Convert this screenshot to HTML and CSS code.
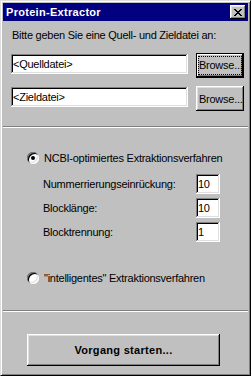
FILE: index.html
```html
<!DOCTYPE html>
<html lang="de">
<head>
    <meta charset="UTF-8">
    <meta name="viewport" content="width=device-width, initial-scale=1.0">
    <title>Protein-Extractor</title>
    <link rel="stylesheet" href="styles.css">
</head>
<body>
<div class="window">
    <div class="titlebar">
        <span class="title">Protein-Extractor</span>
        <button class="close" type="button">
            <svg width="8" height="7" viewBox="0 0 8 7" shape-rendering="crispEdges"><path fill="#000" d="M0 0h2v1H0zM6 0h2v1H6zM1 1h2v1H1zM5 1h2v1H5zM2 2h4v1H2zM3 3h2v1H3zM2 4h4v1H2zM1 5h2v1H1zM5 5h2v1H5zM0 6h2v1H0zM6 6h2v1H6z"/></svg>
        </button>
    </div>
    <div class="content">
        <p class="prompt">Bitte geben Sie eine Quell- und Zieldatei an:</p>
        <div class="file-row first">
            <input class="field file" type="text" value="&lt;Quelldatei&gt;">
            <button class="btn browse default" type="button"><span class="focus">Browse...</span></button>
        </div>
        <div class="file-row">
            <input class="field file" type="text" value="&lt;Zieldatei&gt;">
            <button class="btn browse" type="button">Browse...</button>
        </div>
        <hr class="sep first">
        <div class="radio-row first">
            <span class="radio checked"></span>
            <span class="label">NCBI-optimiertes Extraktionsverfahren</span>
        </div>
        <div class="params">
            <div class="param"><span>Nummerrierungseinrückung:</span><input class="field num" type="text" value="10"></div>
            <div class="param"><span>Blocklänge:</span><input class="field num" type="text" value="10"></div>
            <div class="param"><span>Blocktrennung:</span><input class="field num" type="text" value="1"></div>
        </div>
        <div class="radio-row second">
            <span class="radio"></span>
            <span class="label">"intelligentes" Extraktionsverfahren</span>
        </div>
        <hr class="sep second">
        <button class="btn start" type="button">Vorgang starten...</button>
    </div>
</div>
</body>
</html>
```

FILE: styles.css
```css
html, body {
    margin: 0;
    padding: 0;
    background: #c0c0c0;
}
body {
    font-family: "Liberation Sans", Arial, sans-serif;
    font-size: 11px;
    letter-spacing: -0.25px;
    color: #000;
}

.window {
    width: 251px;
    height: 376px;
    box-sizing: border-box;
    padding: 2px;
    border: 1px solid;
    border-color: #dfdfdf #000 #000 #dfdfdf;
    box-shadow: inset 1px 1px #fff, inset -1px -1px #808080;
    background: #c0c0c0;
}

/* caption */
.titlebar {
    height: 18px;
    background: #000080;
    display: flex;
    align-items: center;
    justify-content: space-between;
}
.titlebar .title {
    color: #fff;
    font-weight: bold;
    letter-spacing: 0.3px;
    line-height: 18px;
    padding-left: 3px;
}
.close {
    width: 16px;
    height: 14px;
    margin-right: 2px;
    padding: 0 0 0 4px;
    border: 0;
    background: #c0c0c0;
    box-shadow: inset -1px -1px #000, inset 1px 1px #fff, inset -2px -2px #808080, inset 2px 2px #dfdfdf;
    display: flex;
    align-items: center;
}
.close svg {
    display: block;
}

.content {
    padding: 0 4px 0 8px;
}
.prompt {
    margin: 8px 0 0 1px;
    line-height: 13px;
}

/* controls */
.field {
    box-sizing: border-box;
    height: 20px;
    margin: 0;
    border: 0;
    padding: 0 2px;
    background: #fff;
    font: inherit;
    letter-spacing: inherit;
    color: #000;
    outline: none;
    box-shadow: inset -1px -1px #fff, inset 1px 1px #808080, inset -2px -2px #dfdfdf, inset 2px 2px #000;
}
.btn {
    box-sizing: border-box;
    margin: 0;
    border: 0;
    background: #c0c0c0;
    font: inherit;
    letter-spacing: inherit;
    color: #000;
    box-shadow: inset -1px -1px #000, inset 1px 1px #fff, inset -2px -2px #808080, inset 2px 2px #dfdfdf;
}

.file-row {
    display: flex;
    align-items: flex-start;
    gap: 8px;
    margin-top: 8px;
}
.file-row.first {
    margin-top: 11px;
}
.field.file {
    flex: 1;
    min-width: 0;
    margin-top: 1px;
}
.browse {
    width: 48px;
    height: 25px;
    padding: 0 0 0 3px;
    text-align: left;
    white-space: nowrap;
    overflow: hidden;
}
.browse.default {
    display: flex;
    padding: 3px 2px;
    box-shadow: inset 1px 1px #000, inset -2px -2px #000, inset 2px 2px #fff, inset -3px -3px #808080;
}
.browse .focus {
    flex: 1;
    overflow: hidden;
    border: 1px dotted #000;
    line-height: 17px;
}

.sep {
    height: 0;
    border: 0;
    border-top: 1px solid #808080;
    border-bottom: 1px solid #fff;
    margin: 15px -4px 0 -8px;
}
.sep.second {
    margin-top: 25px;
}

.radio-row {
    display: flex;
    align-items: center;
    height: 14px;
    margin: 23px 0 0 16px;
}
.radio-row.second {
    margin-top: 29px;
}
.radio {
    position: relative;
    width: 12px;
    height: 12px;
    border-radius: 50%;
    background: #fff;
    box-shadow: inset 1px 1px #808080, inset -1px -1px #fff, inset 2px 2px #000, inset -2px -2px #dfdfdf;
}
.radio.checked::after {
    content: "";
    position: absolute;
    left: 4px;
    top: 4px;
    width: 4px;
    height: 4px;
    border-radius: 50%;
    background: #000;
}
.radio-row .label {
    margin-left: 5px;
    line-height: 14px;
}

.params {
    display: flex;
    flex-direction: column;
    gap: 4px;
    margin: 9px 24px 0 32px;
}
.param {
    display: flex;
    align-items: center;
    justify-content: space-between;
    height: 20px;
}
.field.num {
    width: 24px;
}

.start {
    display: block;
    width: 193px;
    height: 32px;
    margin: 22px 0 0 16px;
    font-weight: bold;
    letter-spacing: 0.3px;
}
```
